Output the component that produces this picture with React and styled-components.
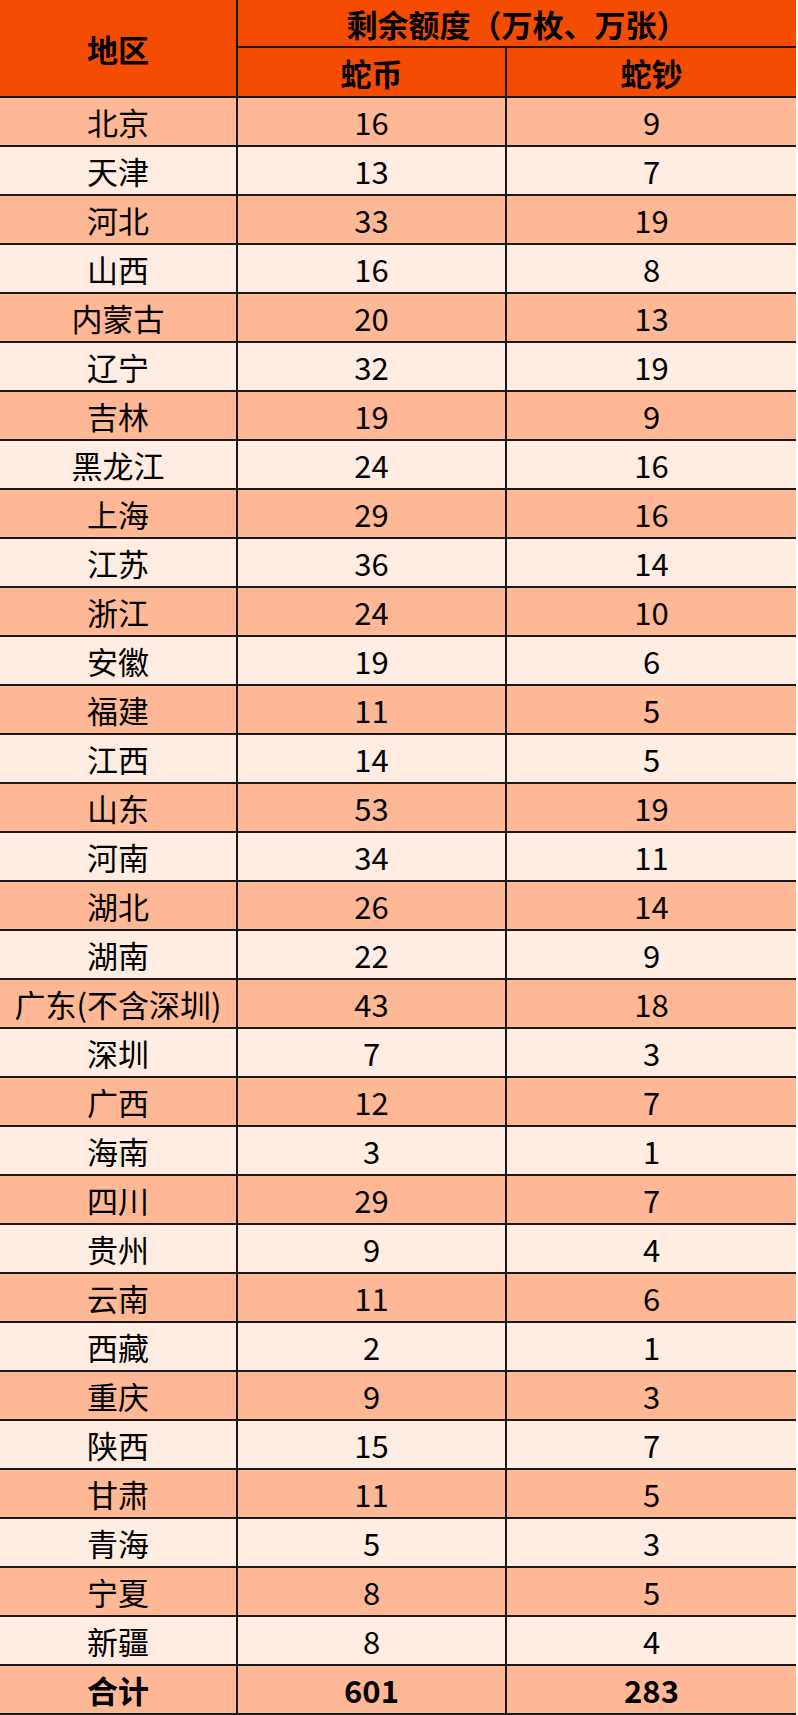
import React from "react";
import styled, { createGlobalStyle } from "styled-components";

const Global = createGlobalStyle`
  html, body { margin: 0; padding: 0; background: #ffffff; }
  body { font-family: "Noto Sans CJK SC", "Noto Sans", sans-serif; }
`;

const Table = styled.div`
  display: grid;
  grid-template-columns: 236px 267px 289px;
  grid-template-rows: 46px 48px;
  grid-auto-rows: 47px;
  gap: 2px;
  width: 794px;
  padding: 0 2px 2px 0;
  background: #1a1a1a;
`;

const Cell = styled.div`
  display: flex;
  align-items: center;
  justify-content: center;
  background: ${(p) => (p.$head ? "#f44d02" : p.$dark ? "#ffb896" : "#ffede3")};
  color: #000;
  font-size: 31px;
  font-weight: ${(p) => (p.$bold ? 700 : 400)};
  line-height: 1;
  white-space: nowrap;
  grid-row: ${(p) => (p.$rowSpan ? `span ${p.$rowSpan}` : "auto")};
  grid-column: ${(p) => (p.$colSpan ? `span ${p.$colSpan}` : "auto")};
`;

const data = [
  ["北京", 16, 9],
  ["天津", 13, 7],
  ["河北", 33, 19],
  ["山西", 16, 8],
  ["内蒙古", 20, 13],
  ["辽宁", 32, 19],
  ["吉林", 19, 9],
  ["黑龙江", 24, 16],
  ["上海", 29, 16],
  ["江苏", 36, 14],
  ["浙江", 24, 10],
  ["安徽", 19, 6],
  ["福建", 11, 5],
  ["江西", 14, 5],
  ["山东", 53, 19],
  ["河南", 34, 11],
  ["湖北", 26, 14],
  ["湖南", 22, 9],
  ["广东(不含深圳)", 43, 18],
  ["深圳", 7, 3],
  ["广西", 12, 7],
  ["海南", 3, 1],
  ["四川", 29, 7],
  ["贵州", 9, 4],
  ["云南", 11, 6],
  ["西藏", 2, 1],
  ["重庆", 9, 3],
  ["陕西", 15, 7],
  ["甘肃", 11, 5],
  ["青海", 5, 3],
  ["宁夏", 8, 5],
  ["新疆", 8, 4],
];

export default function App() {
  return (
    <>
      <Global />
      <Table>
        <Cell $head $bold $rowSpan={2}>地区</Cell>
        <Cell $head $bold $colSpan={2}>剩余额度（万枚、万张）</Cell>
        <Cell $head $bold>蛇币</Cell>
        <Cell $head $bold>蛇钞</Cell>
        {data.map(([name, coin, note], i) => (
          <React.Fragment key={name}>
            <Cell $dark={i % 2 === 0}>{name}</Cell>
            <Cell $dark={i % 2 === 0}>{coin}</Cell>
            <Cell $dark={i % 2 === 0}>{note}</Cell>
          </React.Fragment>
        ))}
        <Cell $dark $bold>合计</Cell>
        <Cell $dark $bold>601</Cell>
        <Cell $dark $bold>283</Cell>
      </Table>
    </>
  );
}
